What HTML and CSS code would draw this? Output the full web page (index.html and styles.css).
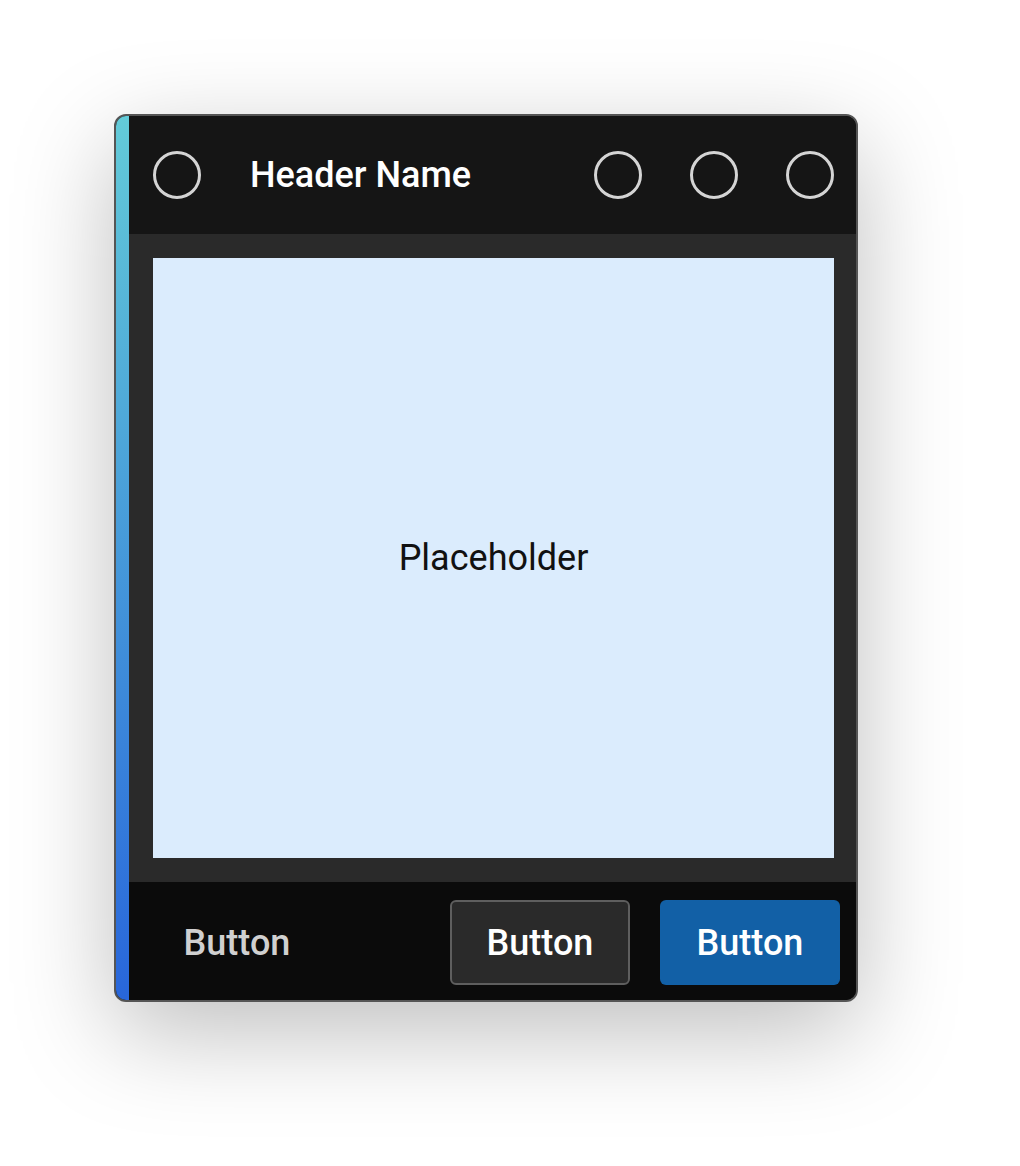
FILE: index.html
```html
<!DOCTYPE html>
<html>
<head>
<meta charset="utf-8">
<link rel="stylesheet" href="styles.css">
</head>
<body>
<div class="card">
  <div class="stripe"></div>
  <div class="main">
    <div class="header">
      <span class="circle"></span>
      <span class="title">Header Name</span>
      <div class="actions">
        <span class="circle"></span>
        <span class="circle"></span>
        <span class="circle"></span>
      </div>
    </div>
    <div class="body">
      <div class="placeholder">Placeholder</div>
    </div>
    <div class="footer">
      <button class="btn btn-ghost">Button</button>
      <div class="spacer"></div>
      <button class="btn btn-outline">Button</button>
      <button class="btn btn-primary">Button</button>
    </div>
  </div>
</div>
</body>
</html>
```
FILE: styles.css
```css
html, body {
  margin: 0;
  padding: 0;
  background: #ffffff;
}
body {
  font-family: Roboto, "Liberation Sans", sans-serif;
  padding: 114px 0 0 114px;
  min-height: 1166px;
  box-sizing: border-box;
}
.card {
  width: 740px;
  height: 884px;
  border: 2px solid #555555;
  border-radius: 12px;
  overflow: hidden;
  display: flex;
  box-shadow: 0 30px 100px rgba(0, 0, 0, 0.26);
  background: #0b0b0b;
}
.stripe {
  width: 13px;
  flex: none;
  background: linear-gradient(to bottom, #63cbd8, #2866db);
}
.main {
  flex: 1;
  display: flex;
  flex-direction: column;
}
.header {
  height: 118px;
  background: #151515;
  display: flex;
  align-items: center;
  padding: 0 22px 0 24px;
  box-sizing: border-box;
}
.circle {
  width: 48px;
  height: 48px;
  box-sizing: border-box;
  border: 3px solid #d4d4d4;
  border-radius: 50%;
  flex: none;
}
.title {
  margin-left: 49px;
  color: #ffffff;
  font-size: 36px;
  font-weight: 500;
  flex: 1;
}
.actions {
  display: flex;
  gap: 48px;
}
.body {
  background: #2a2a2a;
  padding: 24px 22px 24px 24px;
}
.placeholder {
  height: 600px;
  background: #dbecfd;
  display: flex;
  align-items: center;
  justify-content: center;
  color: #111111;
  font-size: 36px;
}
.footer {
  flex: 1;
  background: #0b0b0b;
  display: flex;
  align-items: center;
  padding: 3px 16px 0 18px;
}
.spacer {
  flex: 1;
}
.btn {
  width: 180px;
  height: 85px;
  box-sizing: border-box;
  border-radius: 6px;
  font-family: Roboto, "Liberation Sans", sans-serif;
  font-size: 36px;
  font-weight: 500;
  border: none;
  padding: 0;
}
.btn-ghost {
  background: transparent;
  color: #d0d0d0;
}
.btn-outline {
  background: #2a2a2a;
  border: 2px solid #5e5e5e;
  color: #ffffff;
  margin-right: 30px;
}
.btn-primary {
  background: #1260a6;
  color: #ffffff;
}
```
